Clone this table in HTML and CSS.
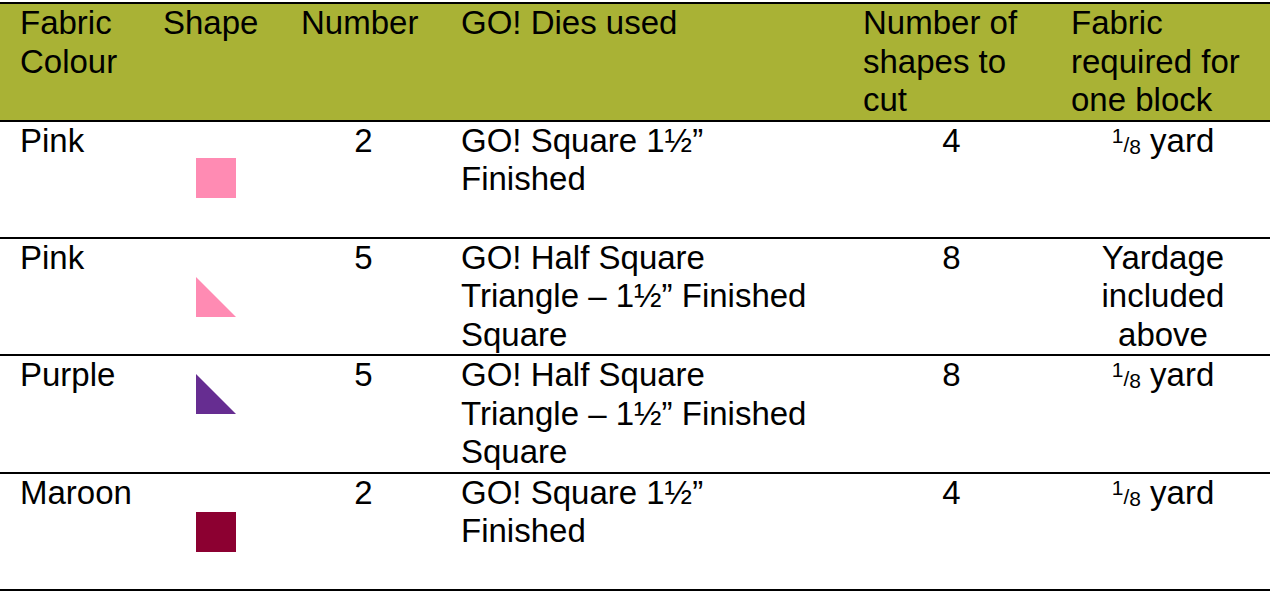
FILE: index.html
```html
<!DOCTYPE html>
<html>
<head>
<meta charset="utf-8">
<link rel="stylesheet" href="styles.css">
</head>
<body>
<table class="fabric-table">
  <colgroup>
    <col class="c1"><col class="c2"><col class="c3"><col class="c4"><col class="c5"><col class="c6">
  </colgroup>
  <thead>
    <tr class="head">
      <th>Fabric<br>Colour</th>
      <th>Shape</th>
      <th>Number</th>
      <th>GO! Dies used</th>
      <th>Number of<br>shapes to<br>cut</th>
      <th>Fabric<br>required for<br>one block</th>
    </tr>
  </thead>
  <tbody>
    <tr>
      <td>Pink</td>
      <td class="shape-cell"><svg class="shape low" viewBox="0 0 40 40" width="40" height="40"><rect width="40" height="40" fill="#FF8BB3"/></svg></td>
      <td class="num">2</td>
      <td>GO! Square 1½”<br>Finished</td>
      <td class="cnt">4</td>
      <td class="yard"><span class="frac"><span class="fn">1</span>/<span class="fd">8</span></span> yard</td>
    </tr>
    <tr>
      <td>Pink</td>
      <td class="shape-cell"><svg class="shape low2" viewBox="0 0 40 40" width="40" height="40"><polygon points="0,0 0,40 40,40" fill="#FF8BB3"/></svg></td>
      <td class="num">5</td>
      <td>GO! Half Square<br>Triangle – 1½” Finished<br>Square</td>
      <td class="cnt">8</td>
      <td class="yard">Yardage<br>included<br>above</td>
    </tr>
    <tr>
      <td>Purple</td>
      <td class="shape-cell"><svg class="shape high" viewBox="0 0 40 40" width="40" height="40"><polygon points="0,0 0,40 40,40" fill="#662D91"/></svg></td>
      <td class="num">5</td>
      <td>GO! Half Square<br>Triangle – 1½” Finished<br>Square</td>
      <td class="cnt">8</td>
      <td class="yard"><span class="frac"><span class="fn">1</span>/<span class="fd">8</span></span> yard</td>
    </tr>
    <tr>
      <td>Maroon</td>
      <td class="shape-cell"><svg class="shape low2" viewBox="0 0 40 40" width="40" height="40"><rect width="40" height="40" fill="#8C0031"/></svg></td>
      <td class="num">2</td>
      <td>GO! Square 1½”<br>Finished</td>
      <td class="cnt">4</td>
      <td class="yard"><span class="frac"><span class="fn">1</span>/<span class="fd">8</span></span> yard</td>
    </tr>
  </tbody>
</table>
</body>
</html>
```

FILE: styles.css
```css
html, body {
  margin: 0;
  padding: 0;
  background: #ffffff;
}
body {
  padding-top: 2px;
  font-family: "Liberation Sans", Arial, Helvetica, sans-serif;
  color: #000000;
}
.fabric-table {
  width: 1270px;
  border-collapse: collapse;
  table-layout: fixed;
  font-size: 33px;
  line-height: 38.5px;
}
.c1 { width: 151px; }
.c2 { width: 138px; }
.c3 { width: 160px; }
.c4 { width: 402px; }
.c5 { width: 208px; }
.c6 { width: 211px; }

.fabric-table th,
.fabric-table td {
  padding: 0 12px;
  vertical-align: top;
  text-align: left;
  font-weight: normal;
  height: 115px;
  white-space: nowrap;
}
.fabric-table th:first-child,
.fabric-table td:first-child {
  padding-left: 20px;
}
.head {
  background: #A9B235;
  border-top: 2px solid #000;
  border-bottom: 2px solid #000;
}
.fabric-table tbody tr {
  border-bottom: 2px solid #000;
}
.fabric-table td.num {
  text-align: center;
  padding-right: 23px;
}
.fabric-table td.cnt {
  text-align: center;
  padding-right: 19px;
}
.fabric-table td.yard {
  text-align: center;
  padding-right: 15px;
}
.shape {
  display: block;
  margin-left: 33px;
}
.shape.low { margin-top: 36px; }
.shape.low2 { margin-top: 38px; }
.shape.high { margin-top: 18px; }

.frac {
  font-size: 21px;
  line-height: 0;
}
.fn {
  vertical-align: 9px;
  line-height: 0;
}
.fd {
  vertical-align: -2px;
  line-height: 0;
}
```
